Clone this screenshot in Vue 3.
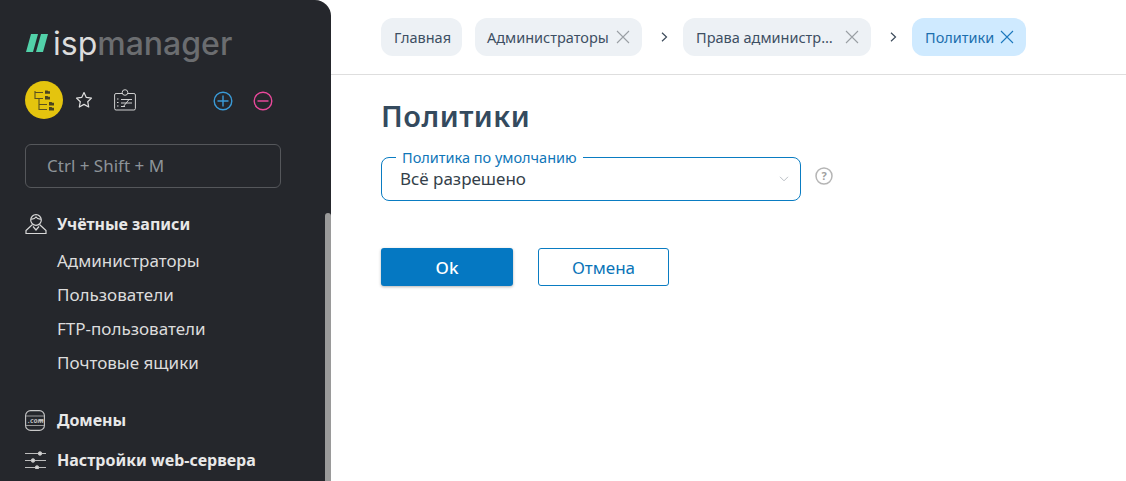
<script setup>
const crumbs = [
  { text: 'Главная', cls: 'c1' },
  { text: 'Администраторы', close: true, cls: 'c2' },
  { text: 'Права администр…', close: true, arrow: true, cls: 'c3' },
  { text: 'Политики', close: true, arrow: true, active: true, cls: 'c4' },
]
const items = ['Администраторы', 'Пользователи', 'FTP-пользователи', 'Почтовые ящики']
</script>

<template>
  <div class="page">
    <aside class="side">
      <div class="logo">
        <svg class="mark" width="22" height="18" viewBox="0 0 22 18"><path d="M5 0h7L7 18H0zM15 0h7l-5 18h-7z" fill="#52d1a9"/></svg>
        <span class="isp">isp</span><span class="mgr">manager</span>
      </div>
      <div class="tools">
        <span class="tree">
          <svg width="22" height="22" viewBox="0 0 22 22" fill="none" stroke="#5a5020" stroke-width="1.100">
            <path d="M2 2v7.500h8M2 3.500h8M6 9.500V20.500h8M6 15.500h8"/>
            <path d="M12 1.500h2.500l.8.800H17v2.500h-5zM12 7h2.500l.8.800H17v2.700h-5zM16 13h2.500l.8.800H21v2.700h-5zM16 18h2.500l.8.800H21v2.700h-5z" fill="#4a4320" stroke="none"/>
          </svg>
        </span>
        <svg class="star" width="18" height="18" viewBox="0 0 18 18" fill="none" stroke="#e0e0e0" stroke-width="1.200" stroke-linejoin="round"><path d="M9 1.500l2.300 4.900 5.200.700-3.800 3.600 1 5.300L9 13.400 4.300 16l1-5.300L1.500 7.100l5.200-.7z"/></svg>
        <svg class="card" width="22" height="22" viewBox="0 0 22 22" fill="none" stroke="#d0d0d0" stroke-width="1"><rect x=".6" y="4.500" width="20.800" height="16.500" rx="1.500"/><circle cx="11" cy="3.500" r="2.800" fill="#25272c"/><path d="M3 10h1.500M3 13.500h1.500M3 17h1.500M7 10.500h11M7 14h11M7 17.500h4M15 10.500l-6 7.500"/></svg>
        <span class="grow"></span>
        <svg class="plus" width="20" height="20" viewBox="0 0 20 20" fill="none" stroke="#3a9bd8" stroke-width="1.400"><circle cx="10" cy="10" r="8.800"/><path d="M10 4.500v11M4.500 10h11"/></svg>
        <svg class="minus" width="20" height="20" viewBox="0 0 20 20" fill="none" stroke="#e8489a" stroke-width="1.400"><circle cx="10" cy="10" r="8.800"/><path d="M4.500 10h11"/></svg>
      </div>
      <div class="search">Ctrl + Shift + M</div>
      <div class="group first">
        <svg width="22" height="20" viewBox="0 0 22 20" fill="none" stroke="#d8d8d8" stroke-width="1.200"><circle cx="11" cy="6" r="5.300"/><path d="M6 5c2.500.3 4-.5 5-2 1 1.500 2.500 2.300 5 2"/><path d="M7.500 10.500L1 16.500v3h20v-3l-6.500-6"/><path d="M8 12.500l3 3.500 3-3.500"/></svg>
        <span>Учётные записи</span>
      </div>
      <ul class="list">
        <li v-for="i in items" :key="i">{{ i }}</li>
      </ul>
      <div class="group dom">
        <svg width="20" height="21" viewBox="0 0 20 21" fill="none" stroke="#c8c8c8" stroke-width="1.100"><rect x=".6" y=".6" width="18.800" height="19.800" rx="5"/><path d="M1 6h18M1 15.500h18" stroke="#999"/><text x="3" y="13" font-size="7" font-style="italic" font-weight="700" font-family="Noto Sans" fill="#bbb" stroke="none">.com</text><path d="M14 10.500h4" stroke="#bbb" stroke-width="2"/></svg>
        <span>Домены</span>
      </div>
      <div class="group web">
        <svg width="22" height="18" viewBox="0 0 22 18" fill="none" stroke="#bdbdbd" stroke-width="1"><path d="M0 2.500h21M0 9.500h21M0 16.500h21"/><circle cx="15" cy="2.500" r="1.800" fill="#d8d8d8"/><circle cx="8" cy="9.500" r="1.800" fill="#d8d8d8"/><circle cx="12" cy="16.500" r="1.800" fill="#d8d8d8"/></svg>
        <span>Настройки web-сервера</span>
      </div>
      <div class="scroll"></div>
    </aside>
    <main class="main">
      <header class="bar">
        <template v-for="c in crumbs" :key="c.text">
          <svg v-if="c.arrow" class="arrow" width="7" height="10" viewBox="0 0 7 10" fill="none" stroke="#3b4a5a" stroke-width="1.200"><path d="M1 .8L5.500 5 1 9.200"/></svg>
          <div class="chip" :class="[c.cls, { on: c.active }]">
            <span>{{ c.text }}</span>
            <svg v-if="c.close" width="14" height="14" viewBox="0 0 14 14" fill="none" stroke="currentColor" stroke-width="1.100"><path d="M1 1l12 12M13 1L1 13"/></svg>
          </div>
        </template>
      </header>
      <section class="body">
        <h1>Политики</h1>
        <div class="row">
          <div class="field">
            <span class="legend">Политика по умолчанию</span>
            <span class="val">Всё разрешено</span>
            <svg width="10" height="6" viewBox="0 0 10 6" fill="none" stroke="#b9bec4" stroke-width="1"><path d="M1 .8l4 4 4-4"/></svg>
          </div>
          <svg class="help" width="18" height="18" viewBox="0 0 18 18" fill="none"><circle cx="9" cy="9" r="8" stroke="#b5b5b5" stroke-width="1.500"/><text x="9" y="13" text-anchor="middle" font-size="11" font-weight="700" font-family="Noto Sans" fill="#a0a0a0">?</text></svg>
        </div>
        <div class="btns">
          <button class="ok">Ok</button>
          <button class="cancel">Отмена</button>
        </div>
      </section>
    </main>
  </div>
</template>

<style scoped>
.page { display: flex; width: 1126px; height: 481px; overflow: hidden; background: #fff; font-family: "Noto Sans", sans-serif; }
.side { position: relative; box-sizing: border-box; flex: none; width: 331px; height: 481px; background: #25272c; border-top-right-radius: 16px; padding: 0 0 0 25px; color: #e4e4e4; overflow: hidden; }
.logo { display: flex; align-items: baseline; height: 28px; padding-top: 26px; font-family: Inter, sans-serif; font-size: 32px; line-height: 36px; }
.mark { margin: 0 5px 0 1px; align-self: center; position: relative; top: 3px; }
.isp { color: #dcdcdc; font-weight: 400; }
.mgr { color: #6b6d70; font-weight: 500; }
.tools { display: flex; align-items: center; margin-top: 27px; height: 38px; width: 248px; }
.tree { display: flex; align-items: center; justify-content: center; width: 38px; height: 38px; border-radius: 50%; background: #e4c40e; }
.star { margin-left: 12px; }
.card { margin-left: 21px; }
.grow { flex: 1; }
.plus, .minus { position: relative; top: 1px; }
.minus { margin-left: 20px; }
.search { box-sizing: border-box; width: 256px; height: 44px; margin-top: 25px; padding-left: 21px; border: 1px solid #55575b; border-radius: 6px; color: #8d9499; font-size: 17px; line-height: 41px; }
.group { display: flex; align-items: center; gap: 10px; font-size: 16px; font-weight: 700; color: #e8e8e8; height: 24px; }
.group svg { flex: none; }
.first { margin-top: 24px; }
.dom { gap: 12px; margin-top: 28px; }
.list { list-style: none; margin: 8px 0 0 32px; padding: 0; font-size: 17px; color: #dcdcdc; }
.list li { height: 34px; line-height: 34px; }
.web { margin-top: 16px; }
.scroll { position: absolute; right: 0; top: 213px; bottom: 0; width: 6px; background: #9a9a9a; border-radius: 3px 3px 0 0; }
.main { flex: 1; min-width: 0; }
.bar { box-sizing: border-box; display: flex; align-items: center; height: 75px; padding: 0 0 1px 50px; border-bottom: 1px solid #dedede; }
.chip { box-sizing: border-box; display: flex; align-items: center; justify-content: space-between; height: 38px; padding: 0 12px 0 13px; border-radius: 12px; background: #edf1f5; color: #3d4f63; font-size: 14.5px; white-space: nowrap; }
.chip svg { color: #9a9fa4; }
.chip.on { background: #cfeaff; color: #1c6fae; }
.chip.on svg { color: #1c78bd; }
.c1 { width: 81px; margin-right: 13px; }
.c2 { width: 167px; padding-left: 12px; }
.c3 { width: 188px; }
.c4 { width: 114px; }
.arrow { flex: none; margin: 0 15px 0 19px; }
.body { padding: 0 0 0 50px; }
h1 { margin: 21px 0 0 0; font-size: 29px; line-height: 40px; font-weight: 600; letter-spacing: .5px; color: #344a5e; }
.row { display: flex; align-items: flex-start; margin-top: 21px; }
.field { position: relative; box-sizing: border-box; display: flex; align-items: center; justify-content: space-between; width: 420px; height: 44px; padding: 0 11px 0 18px; border: 1px solid #0a7cc2; border-radius: 8px; }
.legend { position: absolute; left: 14px; top: -10px; padding: 0 6px; background: #fff; color: #0f76b8; font-size: 14.5px; line-height: 18px; }
.val { font-size: 17px; color: #343f4a; position: relative; top: -1px; }
.help { margin: 10px 0 0 14px; }
.btns { display: flex; gap: 25px; margin-top: 47px; }
button { box-sizing: border-box; height: 38px; border-radius: 3px; font-family: inherit; font-size: 17px; }
.ok { width: 132px; border: 0; background: #0578c2; color: #fff; font-weight: 500; box-shadow: 0 1px 3px rgba(0,0,0,.3); }
.cancel { width: 131px; background: #fff; border: 1px solid #0a7cc2; color: #0a74b8; }
</style>
